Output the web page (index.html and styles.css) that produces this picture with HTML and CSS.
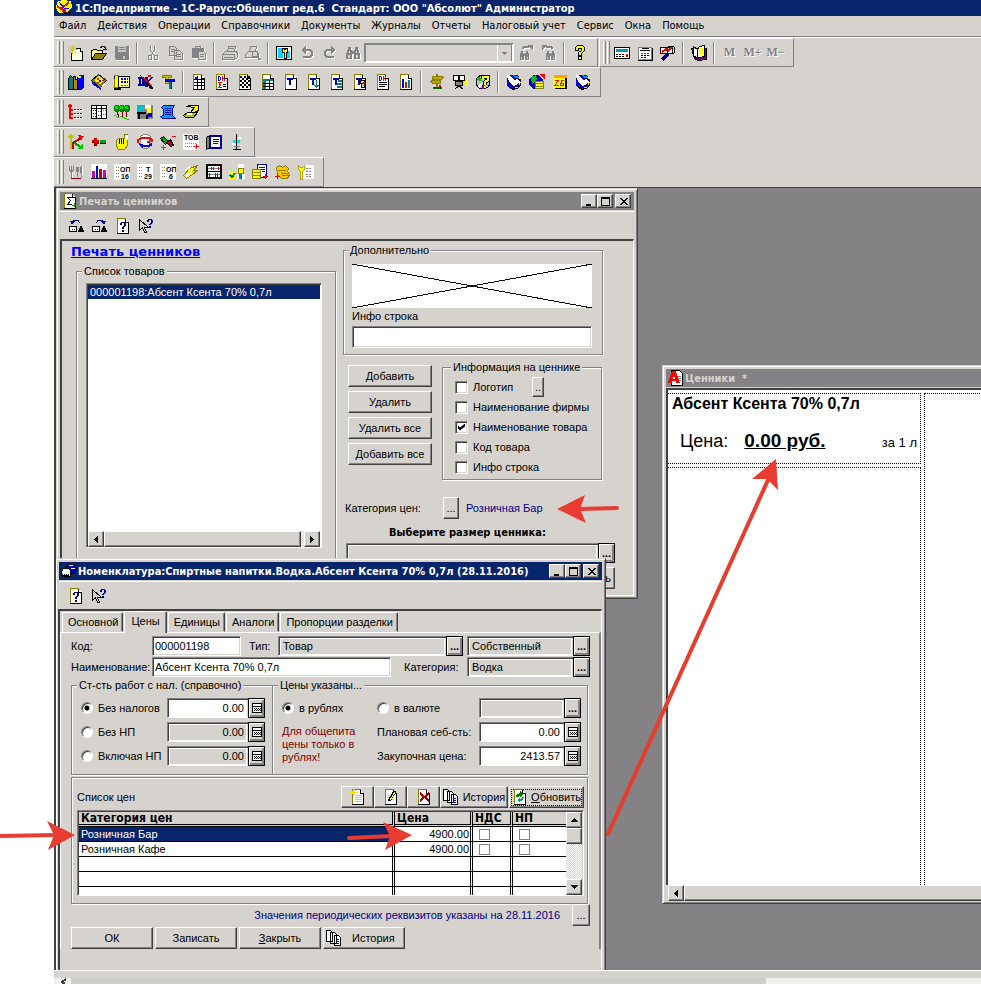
FILE: index.html
```
<!DOCTYPE html>
<html lang="ru">
<head>
<meta charset="utf-8">
<title>1С:Предприятие</title>
<link rel="stylesheet" href="styles.css">
</head>
<body>
<svg class="sprite" aria-hidden="true">
  <symbol id="pg" viewBox="0 0 16 16"><path fill="#fff" d="M3 1h7l4 4v10H3z"/><path fill="none" stroke="#848200" d="M2.5 15v-14.5h8"/><path fill="none" stroke="#000" d="M10.5 1v3.5h3M13.5 4v11.5M2 15.5h12"/></symbol>
  <symbol id="help" viewBox="0 0 16 16"><use href="#pg"/><path fill="#000084" d="M5 5h2v2H5zM6 4h4v1H6zM9 5h2v3H9zM8 8h2v1H8zM7 9h2v2H7zM7 12h2v2H7z"/></symbol>
  <symbol id="what" viewBox="0 0 16 16"><path fill="#d6d3ce" stroke="#000" d="M1.5 1.5v11l3-3 2 5h2l-2-5h4z"/><path fill="#000084" d="M10 1h4v1h-4zM9 2h2v2H9zM13 2h2v3h-2zM12 5h2v1h-2zM11 6h2v1h-2zM11 8h2v2h-2z"/></symbol>
  <symbol id="copy" viewBox="0 0 16 16"><path fill="#fff" stroke="#000" d="M.5 .5h4l2 2v9h-6zM4.500 2.500h4l2 2v9h-6zM8.500 5.500h4l2 2v8h-6z"/><path stroke="#0000ff" d="M10 9.500h3M10 11.500h3M10 13.500h3"/></symbol>
  <symbol id="calc" viewBox="0 0 10 10"><path fill="#fff" stroke="#000" d="M.5 .5h9v9h-9z"/><path fill="#000" d="M1 3h8v1H1zM2 5h1v1H2zM4 5h1v1H4zM6 5h1v1H6zM8 5h1v1H8zM3 6h1v1H3zM5 6h1v1H5zM7 6h1v1H7zM2 7h1v1H2zM4 7h1v1H4zM6 7h1v1H6zM8 7h1v1H8z"/></symbol>
  <symbol id="find" viewBox="0 0 16 16"><path fill="#848284" d="M3 2h3v3H3zM10 2h3v3h-3zM2 5h5v3H2zM9 5h5v3H9zM7 6h2v3H7zM1 8h6v6H1zM9 8h6v6H9z"/><path fill="#d6d3ce" d="M4 6h1v2H4zM11 6h1v2h-1zM3 10h2v3H3zM11 10h2v3h-2z"/></symbol>
  <symbol id="globe" viewBox="0 0 16 16"><circle cx="8" cy="8" r="7.500" fill="#0000c6"/><path fill="#000" d="M3 12l5 2 5-2 2-5v4l-4 4-4 1-4-3z"/><path fill="#00a0c0" d="M7 1l4 1 2 2h-4z"/><path fill="#fff" d="M1 1l4 1 3 4 4-1 2 3-4 3-3 1-4-4z"/><path fill="#ffff00" d="M13 3h2v2h-2zM13 8h2l-2 4zM9 13h3v1H9z"/></symbol>
  <symbol id="dk" viewBox="0 0 16 16"><use href="#pg"/><path fill="#0000ff" d="M4 2h1v5H4zM5 2h1v1H5zM6 3h1v3H6zM5 6h1v1H5z"/><path fill="#f00" d="M8 2h1v5H8zM9 4h1v1H9zM10 2h1v2h-1zM10 5h1v2h-1z"/></symbol>
  <symbol id="tee" viewBox="0 0 16 16"><use href="#pg"/><path fill="#0000a0" d="M4 4h6v2H8v5H6V6H4z"/></symbol>
  <symbol id="list" viewBox="0 0 16 16"><path fill="#fff" d="M0 0h16v16H0z"/><path stroke="#848284" stroke-dasharray="1 1" d="M2 3.500h12M2 6.500h12M2 9.500h12M2 12.500h12"/></symbol>
</svg>

<div class="app">
  <header class="titlebar">
    <svg class="ic" viewBox="0 0 16 16"><path fill="#ffff00" d="M1 2l5-2 9 1 1 6-5 5-8 1-3-5z"/><path fill="none" stroke="#f00" stroke-width="2" d="M1 6l4 3 8-7"/><path fill="none" stroke="#0000ff" d="M3 2l5 6 5 1"/><path fill="#f00" d="M6 9h4v3H6z"/><path fill="#000" d="M8 12h3v2H8zM12 11h3v3h-3z"/></svg>
    <h1>1С:Предприятие - 1С-Рарус:Общепит ред.6&nbsp; Стандарт: ООО "Абсолют" Администратор</h1>
  </header>
  <nav class="menu">
    <button>Файл</button><button>Действия</button><button>Операции</button><button>Справочники</button><button>Документы</button><button>Журналы</button><button>Отчеты</button><button>Налоговый учет</button><button>Сервис</button><button>Окна</button><button>Помощь</button>
  </nav>

  <div class="bars">
    <div class="barline">
      <div class="bar">
        <button aria-label="Новый"><svg class="ic" viewBox="0 0 16 16"><path fill="#ffffde" d="M4 4h7l4 4v8H4z"/><path fill="none" stroke="#000" d="M3.500 8v7.500h11v-9M11 3.500h1v3h3M8 3.500h3"/><path stroke="#e7c300" fill="none" d="M4.500 0v9M0 4.500h9M1 1l7 7M8 1L1 8"/></svg></button>
        <button aria-label="Открыть"><svg class="ic" viewBox="0 0 16 16"><path fill="#ffff84" stroke="#000" d="M.5 14.500v-9h1l1-1h3l1 1h5v3"/><path fill="#848200" stroke="#000" d="M.5 14.500l4-6h11l-4 6z"/><path fill="none" stroke="#000" d="M9 2.500h1l1-1h2l1 1v2M12 4.500h4"/></svg></button>
        <button class="off" aria-label="Сохранить" disabled><svg class="ic" viewBox="0 0 16 16"><path fill="#848284" d="M1 1h14v14H2l-1-1z"/><path fill="#c6c3c6" d="M4 1h8v6H4z"/><path fill="#848284" d="M5 2h6v1H5zM5 4h6v1H5z"/><path fill="#c6c3c6" d="M9 11h2v3H9z"/></svg></button>
        <i class="sep"></i>
        <button class="off" aria-label="Вырезать" disabled><svg class="ic" viewBox="0 0 16 16"><path fill="none" stroke="#848284" d="M5.500 1v4l4 6M9.500 1v4l-4 6"/><path fill="none" stroke="#848284" d="M3.500 10.500h3v4h-3zM9.500 10.500h3v4h-3z"/></svg></button>
        <button class="off" aria-label="Копировать" disabled><svg class="ic" viewBox="0 0 16 16"><path fill="#d6d3ce" stroke="#848284" d="M1.500 1.500h5l2 2v7h-7zM6.500 5.500h5l3 3v6h-8z"/><path stroke="#848284" d="M3 4.500h4M3 6.500h3M8 9.500h5M8 11.500h5"/></svg></button>
        <button class="off" aria-label="Вставить" disabled><svg class="ic" viewBox="0 0 16 16"><path fill="#848284" d="M1 3h3V1h6v2h3v10H1z"/><path fill="#d6d3ce" stroke="#848284" d="M7.500 6.500h5l2 2v6h-7z"/><path stroke="#848284" d="M9 9.500h4M9 11.500h4"/><path fill="#d6d3ce" d="M5 2h4v1H5z"/></svg></button>
        <i class="sep"></i>
        <button class="off" aria-label="Печать" disabled><svg class="ic" viewBox="0 0 16 16"><path fill="#d6d3ce" stroke="#848284" d="M5.500 6.500l1-5h7l-1 5M.5 9.500l3-3h11l1 2v4l-3 2h-12z"/><path stroke="#848284" d="M7 3.500h5M1 9.500h12M2 12.500h9M12.500 10v5"/></svg></button>
        <button class="off" aria-label="Просмотр" disabled><svg class="ic" viewBox="0 0 16 16"><path fill="#d6d3ce" stroke="#848284" d="M4.500 6.500l1-5h6l-1 5M.5 9.500l3-3h8l2 2v4h-13z"/><circle cx="10" cy="9" r="3" fill="#d6d3ce" stroke="#848284"/><path stroke="#848284" stroke-width="2" d="M12 11l3 4"/></svg></button>
        <i class="sep"></i>
        <button aria-label="Ключ"><svg class="ic" viewBox="0 0 16 16"><path fill="#fff" stroke="#000" d="M.5 1.500h15v13H.5z"/><path fill="#00d7ff" d="M2 3h5v10H2zM11 6h3v7h-3z"/><path fill="#ffff00" stroke="#000" d="M6.500 3.500h5v4h-1v6h-2v-6h-2z"/><path fill="#000" d="M8 4h2v1H8z"/></svg></button>
        <button class="off" aria-label="Отменить" disabled><svg class="ic" viewBox="0 0 16 16"><path fill="none" stroke="#848284" stroke-width="2" d="M3 5h8l2 2v3l-2 2H4"/><path fill="#848284" d="M2 5l5-4v8z"/></svg></button>
        <button class="off" aria-label="Вернуть" disabled><svg class="ic" viewBox="0 0 16 16"><path fill="none" stroke="#848284" stroke-width="2" d="M13 5H5L3 7v3l2 2h7"/><path fill="#848284" d="M14 5L9 1v8z"/></svg></button>
        <button class="off" aria-label="Найти" disabled><svg class="ic"><use href="#find"/></svg></button>
        <select class="search" aria-label="Поиск"><option></option></select>
        <button class="off" aria-label="Найти далее" disabled><svg class="ic" viewBox="0 0 16 16"><use href="#find" x="1" y="5" width="11" height="11"/><path fill="none" stroke="#848284" stroke-width="2" d="M4 4l2-2h5"/><path fill="#848284" d="M10 0h5v6z"/></svg></button>
        <button class="off" aria-label="Найти ранее" disabled><svg class="ic" viewBox="0 0 16 16"><use href="#find" x="4" y="5" width="11" height="11"/><path fill="none" stroke="#848284" stroke-width="2" d="M12 4l-2-2H5"/><path fill="#848284" d="M6 0H1v6z"/></svg></button>
        <i class="sep"></i>
        <button aria-label="Справка"><svg class="ic" viewBox="0 0 16 16"><path fill="#ffff00" stroke="#000" d="M3.500 5.500v-3l2-2h5l2 2v3l-3 3v2h-3v-3l3-2v-2h-3v2zM6.500 11.500h3v3h-3z"/></svg></button>
      </div>
      <div class="bar">
        <button aria-label="Калькулятор"><svg class="ic" viewBox="0 0 16 16"><path fill="#fff" stroke="#000" d="M.5 2.500h15v11H.5z"/><path fill="#00a2a5" d="M2 4h12v3H2z"/><path fill="#000" d="M2 9h2v1H2zM5 9h2v1H5zM8 9h2v1H8zM2 11h2v1H2zM5 11h2v1H5zM8 11h2v1H8z"/><path fill="#f00" d="M12 9h2v3h-2z"/></svg></button>
        <button aria-label="Расчет"><svg class="ic" viewBox="0 0 16 16"><path fill="#fff" stroke="#848284" d="M1.500 2.500h13v12h-13z"/><path fill="#000" d="M5 3h7v1H5zM3 5h10v1H3zM1 15h14v1H1zM15 3h1v13h-1zM4 10h2v1H4zM7 10h2v1H7zM10 10h2v1h-2zM4 12h2v1H4zM7 12h2v1H7z"/><path fill="#f00" d="M4 8h2v1H4zM7 8h2v1H7zM10 8h2v1h-2z"/></svg></button>
        <button aria-label="Табло"><svg class="ic" viewBox="0 0 16 16"><path fill="#fff" stroke="#000" d="M.5 2.500h12v6H.5z"/><path fill="none" stroke="#f00" stroke-width="2" d="M2 7l4-3 2 2 4-4"/><circle cx="11" cy="5" r="4" fill="none" stroke="#000"/><path stroke="#000084" stroke-width="3" d="M8 9l-6 6"/></svg></button>
        <i class="sep"></i>
        <button aria-label="Синтакс-помощник"><svg class="ic" viewBox="0 0 16 16"><path fill="#840084" stroke="#000" d="M.5 3.500l3 10 3 2 9-1V4z"/><path fill="#fff" stroke="#000" d="M2.500 1.500l4 3v9l-4-3zM6.500 4.500l2-3 5-1v11l-5 1-2 1z"/><path stroke="#ffff00" stroke-width="3" stroke-dasharray="1 1" d="M10 3v8"/></svg></button>
        <i class="sep"></i>
        <button class="off mem" disabled>M</button>
        <button class="off mem" disabled>M+</button>
        <button class="off mem" disabled>M−</button>
      </div>
    </div>

    <div class="barline">
      <div class="bar">
        <button aria-label="План счетов"><svg class="ic" viewBox="0 0 16 16"><path fill="#008284" stroke="#000" d="M.5 4.500l2-3 3 3v11h-5z"/><path fill="#c68200" stroke="#000" d="M5.500 2.500h2v3h2v10h-4z"/><path fill="#0000ff" stroke="#000" d="M9.500 3.500l2-2h4v12l-2 2h-4z"/><path fill="#ffff00" d="M10 2h3v2h-3z"/></svg></button>
        <button aria-label="Справочник"><svg class="ic" viewBox="0 0 16 16"><path fill="#848200" stroke="#000" d="M.5 6.500l7-6 8 6-6 8z"/><path fill="#ffff00" d="M3 6l5-4 5 4-4 4z"/><path fill="#0000ff" d="M1 8l9 6v2L1 10z"/><path stroke="#fff" d="M10 14l5-6"/><path fill="#f00" d="M6 4h2v2H6zM11 6h2v1h-2zM6 8h2v1H6z"/><path fill="#0000ff" d="M8 6h2v2H8z"/></svg></button>
        <button aria-label="Журнал операций"><svg class="ic" viewBox="0 0 16 16"><path fill="#ffff00" stroke="#848200" d="M.5 1.500h4v12h-4z"/><path fill="#ffff84" stroke="#000" d="M4.500 2.500h11v11h-11z"/><path stroke="#0000ff" stroke-width="2" stroke-dasharray="2 1" d="M7 5h7M7 8h7"/><path stroke="#f00" stroke-dasharray="2 1" d="M7 11.500h7"/><path fill="#000" d="M0 14h7v2H0zM0 2h1v3H0z"/></svg></button>
        <button aria-label="Проводка"><svg class="ic" viewBox="0 0 16 16"><path fill="#0000a0" d="M1 3h5l2 2v7H1v-2h1V5H1zM8 3h3v4l3-4h2l-4 5 4 6h-2l-3-5v4H8z"/><path fill="#d6d3ce" d="M4 5h1v5H4z"/><path stroke="#f00" d="M3 1l12 11"/><path stroke="#000" stroke-width="2" d="M9 8l6 7"/><path fill="#f00" d="M11 1h3v2h-3z"/></svg></button>
        <button aria-label="Типовые операции"><svg class="ic" viewBox="0 0 16 16"><path fill="#c6c300" stroke="#848200" d="M2.500 1.500h9v2h-3v6h-3v-6h-3z"/><path fill="#0000ff" d="M5 5h10v3h-3v7H9V8H5z"/><path fill="#008284" d="M9 8h2v7H9z"/></svg></button>
        <i class="sep"></i>
        <button aria-label="Таблица"><svg class="ic" viewBox="0 0 16 16"><use href="#pg"/><path stroke="#000" fill="none" d="M3 5.500h10M3 8.500h10M3 11.500h10M6.500 2v13M10.500 5v10"/><path fill="#0000ff" d="M4 3h2v2H4z"/></svg></button>
        <button aria-label="Сальдо"><svg class="ic" viewBox="0 0 16 16"><use href="#dk"/><path fill="none" stroke="#f00" d="M8 8.500H4.500l2 2.500-2 2.500H8"/><path stroke="#000" d="M9 10.500h3M9 12.500h3"/></svg></button>
        <button aria-label="Шахматка"><svg class="ic" viewBox="0 0 16 16"><use href="#pg"/><path stroke="#000" stroke-width="2" stroke-dasharray="2 2" d="M3 3h10M3 7h10M3 11h10"/><path stroke="#000" stroke-width="2" stroke-dasharray="2 2" stroke-dashoffset="2" d="M3 5h10M3 9h10M3 13h10"/></svg></button>
        <button aria-label="Оборотка"><svg class="ic" viewBox="0 0 16 16"><use href="#pg"/><path fill="#008284" d="M3 5h3v10H3zM6 5h7v2H6z"/><path stroke="#000" d="M3 9.500h10M3 12.500h10M9.500 6v9"/></svg></button>
        <button aria-label="Карточка"><svg class="ic" viewBox="0 0 16 16"><use href="#tee"/></svg></button>
        <button aria-label="Карточка счета"><svg class="ic" viewBox="0 0 16 16"><use href="#tee"/><path fill="#008284" d="M10 6h1v5h2l-3 3-2-3h2z"/></svg></button>
        <button aria-label="Анализ"><svg class="ic" viewBox="0 0 16 16"><use href="#tee"/><path fill="#008284" d="M9 6h4v2H9zM8 9h5v2H8zM8 12h5v2H8z"/></svg></button>
        <button aria-label="Анализ счета"><svg class="ic" viewBox="0 0 16 16"><use href="#tee"/><path fill="#d6d3ce" stroke="#000" d="M8.500 6.500h4v3h-4zM9.500 9.500v4h3v-4"/><path fill="#f00" d="M11 8h2v2h-2z"/></svg></button>
        <button aria-label="Отчет"><svg class="ic" viewBox="0 0 16 16"><use href="#dk"/><path stroke="#000" d="M4 8.500h8M4 10.500h8M4 12.500h6"/></svg></button>
        <button aria-label="Диаграмма"><svg class="ic" viewBox="0 0 16 16"><use href="#pg"/><path fill="#0000ff" d="M4 5h2v9H4z"/><path fill="#f00" d="M7 8h2v6H7z"/><path fill="#008284" d="M10 6h2v8h-2z"/></svg></button>
        <i class="sep"></i>
        <button aria-label="Путеводитель"><svg class="ic" viewBox="0 0 16 16"><path fill="#848200" d="M7 0h2v15H7z"/><path fill="#c6a200" stroke="#848200" d="M3.500 2.500h9l2 1-2 2h-9zM1.500 7.500l2-1h8v3h-8z"/><path fill="#006500" d="M4 13h9v2H4z"/><path fill="#f00" d="M10 11h2v2h-2z"/></svg></button>
        <button aria-label="Видео"><svg class="ic" viewBox="0 0 16 16"><circle cx="4" cy="4" r="3" fill="#fff" stroke="#000"/><circle cx="10" cy="4" r="3" fill="#fff" stroke="#000"/><path fill="#848284" stroke="#000" d="M3.500 7.500h7v4h-7z"/><path fill="none" stroke="#000" d="M7 12l-4 3M7 12l4 3"/><path fill="#ffff00" d="M11 9l5-5v10z"/></svg></button>
        <button aria-label="Диск"><svg class="ic" viewBox="0 0 16 16"><circle cx="8" cy="8" r="7" fill="#a5c6c6" stroke="#000"/><path fill="#00c300" d="M8 8L1 5l3-3z"/><path fill="#8400c6" d="M8 8l3 6-4 1z"/><path fill="#fff" d="M8 8L2 12l3 2z"/><path fill="none" stroke="#000" stroke-width="4" d="M8 5V3h5v3l-3 2v3"/><path fill="none" stroke="#ffff00" stroke-width="2" d="M8 5V3h5v3l-3 2v3M10 12v2"/></svg></button>
        <i class="sep"></i>
        <button aria-label="Интернет"><svg class="ic"><use href="#globe"/></svg></button>
        <button aria-label="Курсы валют"><svg class="ic" viewBox="0 0 16 16"><circle cx="7" cy="8" r="7" fill="#0000c6"/><path fill="#00c300" d="M2 3l5-2 1 5-5 4z"/><path fill="#f00" d="M10 0h6v6z"/><path fill="#ffff00" stroke="#848200" d="M6.500 7.500h8v7h-8z"/><path stroke="#848200" d="M7 9.500h7M7 12.500h7"/></svg></button>
        <button aria-label="Календарь"><svg class="ic" viewBox="0 0 16 16"><path fill="#000" d="M2 2h13v13H3z"/><path fill="#ffff00" d="M1 3h12v11H1z"/><path fill="#ffa200" d="M2 1h13v3H2z"/><path fill="none" stroke="#f00" d="M3 6.500h3l-3 5h4M11.500 6.500h-2l-1 5h3v-2h-3"/></svg></button>
        <button aria-label="Сайт"><svg class="ic"><use href="#globe"/></svg></button>
      </div>
    </div>

    <div class="barline">
      <div class="bar">
        <button aria-label="Структура"><svg class="ic" viewBox="0 0 16 16"><path fill="none" stroke="#f00" stroke-width="2" d="M2 0v15M0 2h4M2 6h3M2 10h3M2 14h3"/><path stroke="#fff" stroke-width="2" d="M6 6h9M6 10h9M6 14h9"/><path stroke="#840000" stroke-dasharray="2 1" d="M6 5.500h9M6 9.500h9M6 13.500h9"/></svg></button>
        <button aria-label="Реестр"><svg class="ic" viewBox="0 0 16 16"><path fill="#fff" stroke="#000" d="M.5 1.500h15v13H.5zM5.500 2v12M10.500 2v12M1 4.500h14"/><path stroke="#0000ff" stroke-dasharray="1 1" d="M2 6.500h3M2 9.500h3M2 12.500h3"/><path stroke="#f00" stroke-dasharray="1 1" d="M7 7.500h3M7 11.500h3"/><path stroke="#00c300" stroke-dasharray="1 1" d="M12 6.500h3M12 10.500h3"/></svg></button>
        <button aria-label="Сады"><svg class="ic" viewBox="0 0 16 16"><path fill="#008200" d="M0 2h1V1h4v1h1V1h4v1h1V1h4v1h1v5h-1v1h-4V7h-1v1H6V7H5v1H1V7H0z"/><path fill="#00e300" d="M1 2h3v3H1zM6 2h3v3H6zM11 2h3v3h-3z"/><path stroke="#840000" fill="none" d="M3 8l2 5M8 8l1 5M13 8l-1 5"/><path stroke="#00e300" fill="none" d="M0 11l5 3M6 12l9 4"/></svg></button>
        <button aria-label="Сотрудник"><svg class="ic" viewBox="0 0 16 16"><path fill="#848284" d="M0 1h16v14H0z"/><path fill="#00c3c6" d="M1 2h6v5H1z"/><path fill="#fff" d="M8 1h6v4H8z"/><path fill="#ffff00" d="M10 4h4v5h-4z"/><path fill="#0000c6" d="M11 9h4v4h-4z"/><path fill="#000" d="M0 8h9v2H0zM1 10h2v5H1zM9 11h2v4H9z"/></svg></button>
        <button aria-label="Свиток"><svg class="ic" viewBox="0 0 16 16"><path fill="#00a2ff" stroke="#0000a0" d="M3.500 1.500h11l-2 3v7l3 3h-13l-2-2 3-1v-6l-2-2z"/><path stroke="#0000a0" d="M5 4.500h6M5 6.500h6M5 8.500h6M5 10.500h6"/></svg></button>
        <button aria-label="Степлер"><svg class="ic" viewBox="0 0 16 16"><path fill="#ffff00" stroke="#000" d="M4.500 2.500l2-1h9v5l-4 2h-4l4-5z"/><path fill="#c6c300" stroke="#000" d="M.5 11.500l4-3h10l-4 5h-8z"/><path fill="#fff" d="M4 9h5v2H4z"/></svg></button>
      </div>
    </div>

    <div class="barline">
      <div class="bar">
        <button aria-label="Движение"><svg class="ic" viewBox="0 0 16 16"><path fill="none" stroke="#c6c300" stroke-width="2" d="M3 15V2M0 4l3-3 3 3"/><path fill="none" stroke="#c60000" stroke-width="2" d="M5 15V9l8-5"/><path fill="#f00" d="M10 1l6 1-3 5z"/><path fill="none" stroke="#00a200" stroke-width="2" d="M6 9l7 4"/><path fill="#00c300" d="M15 9v6h-6z"/></svg></button>
        <button aria-label="Плюс-минус"><svg class="ic" viewBox="0 0 16 16"><path fill="#c60000" d="M3 4h3v7H3zM1 6h7v3H1z"/><path fill="#00a200" d="M9 6h6v3H9z"/><path fill="#000" d="M3 11h3v1H3zM6 9h2v1H6zM9 9h6v1H9z"/></svg></button>
        <button aria-label="Ручной ввод"><svg class="ic" viewBox="0 0 16 16"><path fill="#ffff00" stroke="#848200" d="M2.500 6.500l2-2h6v-4h3v11l-3 4h-6l-2-3z"/><path fill="#fff" d="M11 1h3v5h-3z"/><path stroke="#000" d="M5.500 5v5M7.500 5v5M9.500 5v5"/></svg></button>
        <button aria-label="Обмен"><svg class="ic" viewBox="0 0 16 16"><path fill="#fff" stroke="#848284" d="M3.500 2.500l3-2h4l3 2v9l-3 3h-4l-3-2z"/><path fill="none" stroke="#f00" stroke-width="2" d="M1 9V6l4-2h7l3 2v2"/><path fill="none" stroke="#0000ff" stroke-width="2" d="M2 10l4 2h6l3-2"/><path fill="#f00" d="M9 8l4-2v4z"/><path fill="#0000ff" d="M6 10l-3 2 3 3z"/></svg></button>
        <button aria-label="Связь"><svg class="ic" viewBox="0 0 16 16"><path fill="#00a200" stroke="#000" d="M.5 4.500l3-2 5 5-3 3z"/><path fill="#c60000" stroke="#000" d="M6.500 8.500l4-3 3 6-3 1z"/><path stroke="#f00" d="M12 2.500h4"/><path fill="#00a200" d="M1 13h5v1H1zM3 11h1v5H3z"/></svg></button>
        <button aria-label="Товары"><svg class="ic" viewBox="0 0 16 16"><use href="#list"/><path fill="#fff" d="M0 0h16v7H0z"/><text class="tiny" x="1" y="6">ТОВ</text><path stroke="#f00" fill="none" d="M11 12.500h5M13.500 10v5"/></svg></button>
        <button aria-label="Книга"><svg class="ic" viewBox="0 0 16 16"><path fill="#848284" stroke="#000" d="M.5 3.500l3-2v12l-3 2z"/><path fill="#fff" stroke="#0000a0" stroke-width="2" d="M4 2h11v12H4z"/><path stroke="#0000ff" d="M7 5.500h6M7 7.500h6M7 9.500h5"/></svg></button>
        <button aria-label="Весы"><svg class="ic" viewBox="0 0 16 16"><path stroke="#000" d="M7.500 0v15M4 15.500h8"/><path fill="#00e3e7" d="M4 6h3v3H4zM8 6h3v3H8z"/><path fill="#fff" d="M3 9h4v2H3zM9 3h3v2H9z"/><path stroke="#848284" d="M5 12.500h6"/></svg></button>
      </div>
    </div>

    <div class="barline">
      <div class="bar">
        <button aria-label="Кухня"><svg class="ic" viewBox="0 0 16 16"><path fill="none" stroke="#848284" d="M1.500 2v4l2 2v6M3.500 2v5M5.500 2v4l-2 2M9.500 3v10M8.500 3v4h2V3M13.500 2v12M12.500 3v6"/><path stroke="#fff" d="M4.500 8v6M14.500 3v9"/><path stroke="#840000" d="M3 14.500h10"/></svg></button>
        <button aria-label="Графики"><svg class="ic" viewBox="0 0 16 16"><path fill="#fff" d="M0 0h16v15H0z"/><path fill="#c600c6" d="M1 7h3v7H1zM12 6h3v8h-3z"/><path fill="#0000c6" d="M5 2h2v12H5z"/><path fill="#c60000" d="M8 5h3v9H8z"/><path fill="#000" d="M0 14h16v1H0z"/></svg></button>
        <button aria-label="Форма ОП-16"><svg class="ic" viewBox="0 0 16 16"><use href="#list"/><path fill="#fff" d="M6 1h10v15H6z"/><text class="tiny" x="6" y="8">ОП</text><text class="tiny" x="7" y="15">16</text></svg></button>
        <button aria-label="Форма Т-29"><svg class="ic" viewBox="0 0 16 16"><use href="#list"/><path fill="#fff" d="M6 1h10v15H6z"/><text class="tiny" x="9" y="8">Т</text><text class="tiny" x="7" y="15">29</text></svg></button>
        <button aria-label="Форма ОП-6"><svg class="ic" viewBox="0 0 16 16"><use href="#list"/><path fill="#fff" d="M6 1h10v15H6z"/><text class="tiny" x="6" y="8">ОП</text><text class="tiny" x="9" y="15">6</text></svg></button>
        <button aria-label="Передача"><svg class="ic" viewBox="0 0 16 16"><path fill="#ffff00" stroke="#848200" d="M.5 11.500l6-7 8-3-4 5h4l-5 4-6 4z"/><path stroke="#fff" stroke-width="2" d="M2 7l5-4M3 12l5-4"/></svg></button>
        <button aria-label="Счеты"><svg class="ic" viewBox="0 0 16 16"><path fill="#fff" stroke="#000" stroke-width="2" d="M1 1h14v13H1z"/><path stroke="#848284" d="M2 4.500h12M2 10.500h12"/><path stroke="#c60000" d="M5.500 3v3M7.500 3v3M12.500 3v3M3.500 9v4M9.500 9v4M11.500 9v4"/><path stroke="#000" d="M2 7.500h12"/></svg></button>
        <button aria-label="Повар"><svg class="ic" viewBox="0 0 16 16"><path fill="#fff" d="M9 0h6v4H9zM8 10h8v5H8z"/><path fill="#ffff00" stroke="#848200" d="M9.500 4.500h5v5h-5z"/><path fill="#ffff00" d="M0 8h7v7H0z"/><path stroke="#008200" fill="none" stroke-width="2" d="M1 11l2 2 3-4"/><path fill="#008284" d="M10 10h3v5h-3z"/></svg></button>
        <button aria-label="Оплата"><svg class="ic" viewBox="0 0 16 16"><path fill="#fff" stroke="#0000a0" d="M5.500 .5h9v13h-9z"/><path stroke="#0000ff" d="M7 3.500h6M7 5.500h6M10 7.500h3"/><path fill="#ffff00" stroke="#848200" d="M.5 5.500h8v9h-8zM1 8.500h8M1 11.500h8"/><path stroke="#f00" d="M11 12.500h5M13.500 10v5"/></svg></button>
        <button aria-label="Касса"><svg class="ic" viewBox="0 0 16 16"><path fill="#ffc600" stroke="#848200" d="M1.500 3.500l3-2 3 2 3-2 3 3-1 3 2 3-2 4h-6l-4-4z"/><path stroke="#848200" fill="none" d="M3 6.500h8M6 9.500h8M7 11.500h7"/><path stroke="#f00" d="M0 12.500h5M2.500 10v5"/></svg></button>
        <button aria-label="Настройка"><svg class="ic" viewBox="0 0 16 16"><path fill="#fff" d="M5 1h11v14H5z"/><path stroke="#848284" stroke-dasharray="2 1" d="M8 4.500h6M8 7.500h6M8 10.500h6M8 12.500h6"/><path fill="#ffff00" stroke="#c6a200" d="M.5 1.500l2 2h2l2-2v4l-2 2v8h-2v-8l-2-2z"/></svg></button>
      </div>
    </div>
  </div>

  <main class="desktop">
    <section class="win labels">
      <header class="cap">
        <svg class="ic" viewBox="0 0 16 16"><use href="#pg"/><path fill="none" stroke="#000" d="M10 4.500H5.500l3 3-3 4H10"/><path stroke="#00a200" d="M10 12.500h4M12.500 10v4"/></svg>
        <h2>Печать ценников</h2>
        <button class="cb" aria-label="Свернуть"><svg viewBox="0 0 9 9"><path d="M1 7h5v2H1z"/></svg></button><button class="cb" aria-label="Развернуть"><svg viewBox="0 0 9 9"><path d="M0 0h9v9H0zM1 2v6h7V2z" fill-rule="evenodd"/></svg></button><button class="cb x" aria-label="Закрыть"><svg viewBox="0 0 9 9"><path d="M0 1h2l2.500 2.500L7 1h2L5.500 4.500 9 8H7L4.500 5.500 2 8H0l3.500-3.500z"/></svg></button>
      </header>
      <div class="wtools">
        <button aria-label="Загрузить"><svg class="ic" viewBox="0 0 16 16"><path fill="none" stroke="#000084" d="M3 5l2-2.500h4L11 5"/><path fill="#000084" d="M1 3h5L3 7z"/><path fill="#fff" stroke="#000" d="M.5 8.500h7v5h-7z"/><path fill="#000" d="M3 11h1v1H3zM5 11h1v1H5zM11 8h2v2h1v2h1v2H9v-2h1v-2h1z"/></svg></button>
        <button aria-label="Сохранить"><svg class="ic" viewBox="0 0 16 16"><path fill="none" stroke="#000084" d="M4 5l2-2.500h4L12 5"/><path fill="#000084" d="M14 3H9l3 4z"/><path fill="#fff" stroke="#000" d="M.5 8.500h7v5h-7z"/><path fill="#000" d="M3 11h1v1H3zM5 11h1v1H5zM11 8h2v2h1v2h1v2H9v-2h1v-2h1z"/></svg></button>
        <button aria-label="Описание"><svg class="ic"><use href="#help"/></svg></button>
        <button aria-label="Что это?"><svg class="ic"><use href="#what"/></svg></button>
      </div>
      <div class="client split">
        <div class="goods">
          <a class="heading" href="#">Печать ценников</a>
          <fieldset class="box goodsbox">
            <legend>Список товаров</legend>
            <div class="list">
              <div class="item on">000001198:Абсент Ксента 70% 0,7л</div>
              <div class="hbar"><button class="sb" aria-label="Влево"><svg viewBox="0 0 5 9"><path d="M5 0v9L0 4.500z"/></svg></button><i class="thumb"></i><button class="sb" aria-label="Вправо"><svg viewBox="0 0 5 9"><path d="M0 0v9l5-4.500z"/></svg></button></div>
            </div>
          </fieldset>
        </div>
        <div class="opts">
          <fieldset class="box extra">
            <legend>Дополнительно</legend>
            <svg class="logo" viewBox="0 0 239 44" preserveAspectRatio="none"><path d="M0 0l239 44M239 0L0 44"/></svg>
            <label for="info">Инфо строка</label>
            <input class="fld" id="info" type="text">
          </fieldset>
          <div class="mid">
            <div class="acts"><button class="btn">Добавить</button><button class="btn">Удалить</button><button class="btn">Удалить все</button><button class="btn">Добавить все</button></div>
            <fieldset class="box checks">
              <legend>Информация на ценнике</legend>
              <div class="ck"><label><input type="checkbox">Логотип</label><button class="btn two">..</button></div>
              <div class="ck"><label><input type="checkbox">Наименование фирмы</label></div>
              <div class="ck"><label><input type="checkbox" checked>Наименование товара</label></div>
              <div class="ck"><label><input type="checkbox">Код товара</label></div>
              <div class="ck"><label><input type="checkbox">Инфо строка</label></div>
            </fieldset>
          </div>
          <div class="cat"><span class="catname">Категория цен:</span><button class="btn dots">...</button><span class="navy">Розничная Бар</span></div>
          <div class="size"><label for="size">Выберите размер ценника:</label></div>
          <div class="combo sizefld"><input id="size" type="text" readonly><button aria-label="Выбрать размер">...</button></div>
          <button class="btn print">Печать</button>
        </div>
      </div>
    </section>

    <section class="win sheet">
      <header class="cap">
        <svg class="ic" viewBox="0 0 16 16"><path fill="#fff" stroke="#000" d="M3.500 .5h8l3 3v12h-11z"/><path stroke="#848284" d="M9 6.500h4M9 8.500h4M9 10.500h4"/><path fill="#f00" fill-rule="evenodd" d="M4 1h4l4 12H8l-.5-2h-3L4 13H0zM6 5L5 9h2z"/></svg>
        <h2>Ценники&nbsp; *</h2>
      </header>
      <div class="paper">
        <div class="tag">
          <div class="tname">Абсент Ксента 70% 0,7л</div>
          <div class="tprice"><span>Цена:</span><strong>0.00 руб.</strong><small>за 1 л</small></div>
        </div>
        <div class="rest"></div>
        <div class="next"></div>
      </div>
      <div class="hbar"><button class="sb" aria-label="Влево"><svg viewBox="0 0 5 9"><path d="M5 0v9L0 4.500z"/></svg></button><i class="thumb"></i></div>
    </section>

    <section class="win card active">
      <header class="cap">
        <svg class="ic" viewBox="0 0 16 16"><path fill="#0000c6" stroke="#000" d="M4.500 4.500l4-3h5l2 4-2 5h-3z"/><path fill="#fff" stroke="#000" d="M.5 8.500l2-3h5l2 2v6h-2v-2l-1 2h-1v-2l-1 2h-1v-2l-2 2z"/><path stroke="#fff" d="M8 2.500h4M10 5.500h4"/></svg>
        <h2>Номенклатура:Спиртные напитки.Водка.Абсент Ксента 70% 0,7л (28.11.2016)</h2>
        <button class="cb" aria-label="Свернуть"><svg viewBox="0 0 9 9"><path d="M1 7h5v2H1z"/></svg></button><button class="cb" aria-label="Развернуть"><svg viewBox="0 0 9 9"><path d="M0 0h9v9H0zM1 2v6h7V2z" fill-rule="evenodd"/></svg></button><button class="cb x" aria-label="Закрыть"><svg viewBox="0 0 9 9"><path d="M0 1h2l2.500 2.500L7 1h2L5.500 4.500 9 8H7L4.500 5.500 2 8H0l3.500-3.500z"/></svg></button>
      </header>
      <div class="wtools">
        <button aria-label="Описание"><svg class="ic"><use href="#help"/></svg></button>
        <button aria-label="Что это?"><svg class="ic"><use href="#what"/></svg></button>
      </div>
      <div class="client">
        <div class="tabs"><button>Основной</button><button class="cur">Цены</button><button>Единицы</button><button>Аналоги</button><button>Пропорции разделки</button></div>
        <div class="panel">
          <div class="line"><label class="l1" for="code">Код:</label><input class="fld code" id="code" type="text" value="000001198"><label class="ltype" for="type">Тип:</label><div class="combo grow"><input id="type" type="text" value="Товар" readonly><button aria-label="Выбрать тип">...</button></div><div class="combo side"><input type="text" aria-label="Вид" value="Собственный" readonly><button aria-label="Выбрать вид">...</button></div></div>
          <div class="line"><label class="l1" for="name">Наименование:</label><input class="fld grow" id="name" type="text" value="Абсент Ксента 70% 0,7л"><label class="lcat" for="kind">Категория:</label><div class="combo side"><input id="kind" type="text" value="Водка" readonly><button aria-label="Выбрать категорию">...</button></div></div>
          <div class="groups">
            <fieldset class="box cost">
              <legend>Ст-сть работ с нал. (справочно)</legend>
              <div class="rw"><label><input type="radio" name="tax" checked>Без налогов</label><div class="combo num w"><input type="text" aria-label="Без налогов" value="0.00"><button aria-label="Калькулятор"><svg viewBox="0 0 10 10"><use href="#calc"/></svg></button></div></div>
              <div class="rw"><label><input type="radio" name="tax">Без НП</label><div class="combo num"><input type="text" aria-label="Без НП" value="0.00" readonly><button aria-label="Калькулятор"><svg viewBox="0 0 10 10"><use href="#calc"/></svg></button></div></div>
              <div class="rw"><label><input type="radio" name="tax">Включая НП</label><div class="combo num"><input type="text" aria-label="Включая НП" value="0.00" readonly><button aria-label="Калькулятор"><svg viewBox="0 0 10 10"><use href="#calc"/></svg></button></div></div>
            </fieldset>
            <fieldset class="box curr">
              <legend>Цены указаны...</legend>
              <label><input type="radio" name="cur" checked>в рублях</label>
              <label><input type="radio" name="cur">в валюте</label>
              <div class="combo"><input type="text" aria-label="Валюта" readonly><button aria-label="Выбрать валюту">...</button></div>
              <p class="warn">Для общепита цены только в рублях!</p>
              <label for="plan">Плановая себ-сть:</label>
              <div class="combo num w"><input id="plan" type="text" value="0.00"><button aria-label="Калькулятор"><svg viewBox="0 0 10 10"><use href="#calc"/></svg></button></div>
              <label for="buy">Закупочная цена:</label>
              <div class="combo num w"><input id="buy" type="text" value="2413.57"><button aria-label="Калькулятор"><svg viewBox="0 0 10 10"><use href="#calc"/></svg></button></div>
            </fieldset>
          </div>
          <div class="prices">
            <div class="ptools">
              <span>Список цен</span>
              <button class="btn" aria-label="Новая строка"><svg class="ic" viewBox="0 0 16 16"><use href="#pg"/><path stroke="#c6c3c6" d="M5 6.500h7M5 8.500h7M5 10.500h7M5 12.500h7"/><path stroke="#ffe300" fill="none" d="M3.500 0v8M0 3.500h8M1 1l6 6M6 1L1 6"/></svg></button><button class="btn" aria-label="Изменить"><svg class="ic" viewBox="0 0 16 16"><use href="#pg"/><path stroke="#c6c3c6" d="M4 6.500h7M4 8.500h7M4 10.500h7"/><path stroke="#000" stroke-width="3" d="M6 12l6-10"/><path stroke="#ffff00" d="M7 11l5-8"/></svg></button><button class="btn" aria-label="Удалить"><svg class="ic" viewBox="0 0 16 16"><use href="#pg"/><path stroke="#a50000" stroke-width="2" d="M4 4l9 8M13 4l-9 8"/></svg></button><button class="btn hist"><svg class="ic"><use href="#copy"/></svg>История</button><button class="btn upd"><span><svg class="ic" viewBox="0 0 16 16"><use href="#pg"/><path fill="#008200" d="M4 8l1-3 3-1V2l3 3-3 3V6L6 8z"/><path fill="#00a284" d="M12 8l-1 3-3 1v2l-3-3 3-3v2l2-2z"/></svg><u>О</u>бновить</span></button>
            </div>
            <div class="grid">
              <table>
                <thead><tr><th class="c1">Категория цен</th><th class="c2">Цена</th><th class="c3">НДС</th><th class="c4">НП</th></tr></thead>
                <tbody>
                  <tr class="sel"><td>Розничная Бар</td><td class="n">4900.00</td><td><input type="checkbox" aria-label="НДС"></td><td><input type="checkbox" aria-label="НП"></td></tr>
                  <tr><td>Розничная Кафе</td><td class="n">4900.00</td><td><input type="checkbox" aria-label="НДС"></td><td><input type="checkbox" aria-label="НП"></td></tr>
                  <tr><td></td><td></td><td></td><td></td></tr>
                  <tr><td></td><td></td><td></td><td></td></tr>
                  <tr><td></td><td></td><td></td><td></td></tr>
                </tbody>
              </table>
              <div class="vbar"><button class="sb" aria-label="Вверх"><svg viewBox="0 0 9 5"><path d="M0 5h9L4.500 0z"/></svg></button><i class="thumb"></i><button class="sb" aria-label="Вниз"><svg viewBox="0 0 9 5"><path d="M0 0h9L4.500 5z"/></svg></button></div>
            </div>
          </div>
          <div class="note"><span class="navy">Значения периодических реквизитов указаны на 28.11.2016</span><button class="btn dots">...</button></div>
          <div class="foot"><button class="btn">ОК</button><button class="btn">Записать</button><button class="btn"><u>З</u>акрыть</button><button class="btn hist"><svg class="ic"><use href="#copy"/></svg>История</button></div>
        </div>
      </div>
    </section>
  </main>
  <footer class="status"><i class="s1"></i><i class="s2"></i></footer>
  <div class="scroll"><button aria-label="Влево"><svg viewBox="0 0 8 6"><path d="M7 1L3 4l3 2" fill="none" stroke="#424142" stroke-width="2"/></svg></button><i></i></div>
</div>

<svg class="marks" viewBox="0 0 981 984" aria-hidden="true">
  <g stroke="#e73c31" stroke-width="4" stroke-linecap="round"><path d="M-3 836L56 835"/><path d="M349 838L392 836"/><path d="M617 508L580 509"/><path d="M608 834L768 480"/></g>
  <g fill="#e73c31"><path d="M75 835l-28-14 7 14-6 15z"/><path d="M412 835l-29-13 7 14-5 14z"/><path d="M557 509l28-14-5 14 6 14z"/><path d="M776 459l-24 20 15 0 11 11z"/></g>
</svg>
</body>
</html>
```
FILE: styles.css
```
* { box-sizing: border-box; }
body { margin: 0; background: #fff; color: #000; font: 11px/13px "Liberation Sans", Arial, sans-serif; }
button, input, select { font: inherit; color: inherit; margin: 0; padding: 0; border: 0; border-radius: 0; background: none; }
h1, h2, p { margin: 0; }
svg { display: block; flex: none; shape-rendering: crispEdges; }
.sprite { position: absolute; width: 0; height: 0; }
.ic { width: 16px; height: 16px; }
.tiny { font: bold 7px "Liberation Sans", Arial, sans-serif; }
.navy { color: #000084; }

.app { display: flex; flex-direction: column; min-height: 100vh; margin-left: 54px; background: #d6d3ce; overflow: hidden; }
.titlebar { display: flex; align-items: center; gap: 3px; height: 16px; padding-left: 2px; background: #08246b; color: #fff; }
.titlebar h1, .cap h2 { font: bold 11px/15px "DejaVu Sans Condensed", "DejaVu Sans", sans-serif; white-space: nowrap; }
.menu { display: flex; height: 21px; border-bottom: 1px solid #848284; }
.menu button { padding: 0 6px 0 5px; font: 11px/20px "DejaVu Sans Condensed", "DejaVu Sans", sans-serif; white-space: nowrap; }

/* toolbars */
.barline { display: flex; height: 30px; }
.barline:first-child { border-top: 1px solid #fff; }
.bar { display: flex; align-items: center; padding: 0 6px 0 10px; border: solid; border-width: 1px 1px 1px 0; border-color: #fff #848284 #848284; position: relative; }
.bar + .bar { margin-left: 1px; border-left: 1px solid #fff; }
.bar::before { content: ""; position: absolute; left: 3px; top: 2px; bottom: 2px; width: 7px; background: linear-gradient(90deg, #fff 1px, #d6d3ce 1px 2px, #848284 2px 3px, #d6d3ce 3px 4px, #fff 4px 5px, #d6d3ce 5px 6px, #848284 6px); }
.bar button { display: flex; align-items: center; justify-content: center; width: 23px; height: 24px; flex: none; }
.bar .off svg { filter: drop-shadow(1px 1px 0 #fff); }
.bar .mem { color: #848284; text-shadow: 1px 1px 0 #fff; font: bold 12px "Liberation Serif", "Times New Roman", serif; }
.sep { width: 2px; height: 22px; margin: 0 3px; border-left: 1px solid #848284; border-right: 1px solid #fff; }
.search { appearance: none; width: 150px; height: 20px; border: 2px solid; border-color: #848284 #fff #fff #848284; background: linear-gradient(#848284, #848284) no-repeat right 5px top 7px / 5px 1px, linear-gradient(#848284, #848284) no-repeat right 6px top 8px / 3px 1px, linear-gradient(#848284, #848284) no-repeat right 7px top 9px / 1px 1px, linear-gradient(90deg, transparent 131px, #fff 131px 132px, transparent 132px 145px, #848284 145px); background-color: #d6d3ce; }

/* windows */
.desktop { position: relative; flex: 1; min-height: 783px; border: solid; border-width: 1px 0 0 2px; border-color: #424142; background: #848284; overflow: hidden; }
.win { position: absolute; display: flex; flex-direction: column; padding: 2px; border: 1px solid #d6d3ce; border-right: 1px solid #424142; border-bottom: 1px solid #424142; box-shadow: inset 1px 1px #fff, inset -1px -1px #848284; background: #d6d3ce; }
.labels { left: 0; top: 0; width: 582px; height: 411px; }
.card { left: -1px; top: 370px; width: 551px; }
.sheet { left: 606px; top: 177px; right: -8px; height: 539px; }
.cap { display: flex; align-items: center; height: 19px; margin: 1px 1px 0; padding: 0 3px 0 2px; background: #848284; color: #d6d3ce; border-bottom: 1px solid #d6d3ce; box-shadow: 0 1px #fff; }
.cap h2 { margin: 0 auto 0 1px; }
.active .cap { background: #08246b; color: #fff; }
.cb { display: flex; align-items: center; justify-content: center; width: 16px; height: 14px; background: #d6d3ce; border: 1px solid; border-color: #fff #424142 #424142 #fff; box-shadow: inset -1px -1px #848284; }
.cb svg { width: 9px; height: 9px; }
.cb.x { margin-left: 2px; }
.wtools { display: flex; align-items: center; height: 28px; padding: 2px 0 0 6px; }
.wtools button { width: 23px; display: flex; justify-content: center; }
.client { margin-left: 1px; margin-right: 1px; flex: 1; border: solid; border-width: 2px 1px 1px 2px; border-color: #424142 #fff #fff #424142; }

/* shared controls */
.box { margin: 0; min-width: 0; border: 1px solid #848284; box-shadow: 1px 1px #fff, inset 1px 1px #fff; }
.box legend { padding: 0 2px; margin-left: -4px; height: 13px; background: #d6d3ce; white-space: nowrap; }
.btn { display: flex; align-items: center; justify-content: center; height: 22px; white-space: nowrap; background: #d6d3ce; border: 1px solid; border-color: #fff #424142 #424142 #fff; box-shadow: inset -1px -1px #848284; }
.fld { height: 20px; min-width: 0; padding: 0 2px; background: #fff; border: 1px solid; border-color: #848284 #fff #fff #848284; box-shadow: inset 1px 1px #424142, inset -1px -1px #d6d3ce; }
.combo { display: flex; height: 20px; min-width: 0; border: 1px solid; border-color: #848284 #fff #fff #848284; box-shadow: inset 1px 1px #424142; padding: 1px 0 0 1px; }
.combo input { flex: 1; width: 0; padding: 0 2px; border: 1px solid #fff; }
.combo.num input { text-align: right; }
.combo.w input { background: #fff; }
.combo button { display: flex; align-items: center; justify-content: center; width: 17px; margin: -2px -1px -1px 1px; font-weight: bold; background: #d6d3ce; border: 1px solid #000; box-shadow: inset 1px 1px #fff, inset -1px -1px #848284, inset -2px -2px #848284; }
.combo button svg { width: 10px; height: 10px; }
input[type=checkbox], input[type=radio] { appearance: none; width: 13px; height: 13px; flex: none; background: #fff; }
input[type=checkbox] { border: 1px solid; border-color: #848284 #fff #fff #848284; box-shadow: inset 1px 1px #424142, inset -1px -1px #d6d3ce; }
.ck input:checked { position: relative; }
.ck input:checked::after { content: ""; position: absolute; left: 2px; top: 2px; width: 7px; height: 7px; background: #000; clip-path: polygon(0 2px, 2px 4px, 7px 0, 7px 3px, 2px 7px, 0 5px); }
input[type=radio] { width: 12px; height: 12px; border-radius: 50%; border: 1px solid; border-color: #848284 #fff #fff #848284; box-shadow: inset 1px 1px #424142; }
input[type=radio]:checked { background: radial-gradient(circle, #000 2px, #fff 3px); }
.hbar, .vbar { display: flex; background: #fff conic-gradient(#d6d3ce 25%, #fff 0 50%, #d6d3ce 0 75%, #fff 0) 0 0 / 2px 2px; }
.vbar { flex-direction: column; width: 16px; }
.sb, .thumb { background: #d6d3ce; border: 1px solid; border-color: #fff #424142 #424142 #fff; box-shadow: inset -1px -1px #848284; }
.sb { display: flex; align-items: center; justify-content: center; width: 16px; height: 16px; flex: none; }
.hbar svg { width: 4px; height: 7px; }
.vbar svg { width: 7px; height: 4px; }

/* label printing */
.split { display: flex; }
.goods { width: 281px; padding: 2px 7px 0 9px; }
.heading { display: block; width: max-content; font: bold 13px/18px "DejaVu Sans", sans-serif; color: #0000ff; }
.goodsbox { margin: 4px 0 0 5px; padding: 5px 13px 20px 9px; }
.list { display: flex; flex-direction: column; height: 265px; background: #fff; border: 1px solid; border-color: #848284 #fff #fff #848284; box-shadow: inset 1px 1px #424142; padding: 1px 1px 0 1px; }
.item { height: 14px; padding: 0 2px; line-height: 14px; white-space: nowrap; }
.on { background: #08246b; color: #fff; }
.list .hbar { margin-top: auto; }
.list .thumb { flex: 1; margin-right: 3px; }
.opts { flex: 1; padding-top: 3px; }
.extra { width: 260px; padding: 7px 10px 6px 8px; }
.logo { width: 100%; height: 44px; background: #fff; stroke: #000; margin-bottom: 2px; }
.extra label { display: block; margin-bottom: 3px; }
.extra .fld { width: 100%; height: 22px; display: block; }
.mid { display: flex; margin: 6px 0 0 5px; gap: 10px; }
.acts { display: flex; flex-direction: column; gap: 4px; width: 84px; padding-top: 4px; }
.checks { width: 160px; padding: 3px 0 2px 12px; }
.ck { display: flex; align-items: center; height: 20px; gap: 19px; }
.ck label, .rw label, .curr label { display: flex; align-items: center; gap: 5px; white-space: nowrap; }
.two { width: 12px; height: 20px; }
.cat { display: flex; align-items: center; margin-top: 17px; padding-left: 2px; }
.catname { width: 98px; }
.dots { width: 16px; margin-right: 7px; }
.size { margin-top: 7px; padding-left: 46px; font: bold 11px/13px "DejaVu Sans Condensed", "DejaVu Sans", sans-serif; }
.sizefld { width: 269px; margin: 4px 0 4px 3px; }
.print { width: 84px; margin-left: 188px; justify-content: flex-end; padding-right: 3px; }

/* price tags */
.paper { flex: 1; display: grid; grid-template: auto 1fr / 253px 1fr; padding-top: 3px; margin-left: 1px; background: #fff; border: solid #424142; border-width: 2px 0 0 2px; font-family: "Liberation Sans", Arial, sans-serif; }
.tag { height: 71px; padding-left: 4px; border-top: 1px dotted #000; border-right: 1px dotted #000; border-bottom: 1px dotted #000; }
.tname { font-size: 16px; font-weight: bold; line-height: 20px; }
.tprice { display: flex; align-items: baseline; padding: 15px 3px 0 8px; font-size: 18px; line-height: 24px; }
.tprice strong { margin-left: 16px; font-size: 19px; text-decoration: underline; }
.tprice small { margin-left: auto; font-size: 13px; }
.rest { grid-column: 1; margin-top: 3px; border-top: 1px dotted #000; border-right: 1px dotted #000; }
.next { grid-area: 1 / 2 / 3 / 3; margin-left: 3px; border-top: 1px dotted #000; border-left: 1px dotted #000; }
.sheet .hbar { margin-left: 3px; }
.sheet .thumb { flex: 1; }

/* item card */
.card .client { margin-left: 0; padding-bottom: 40px; }
.tabs { display: flex; align-items: flex-end; height: 21px; padding-left: 2px; }
.tabs button { height: 20px; margin-right: 1px; padding: 0 4px 0 5px; white-space: nowrap; border: 1px solid; border-color: #fff #424142 transparent #fff; box-shadow: inset -1px 0 #848284; border-radius: 2px 2px 0 0; }
.tabs .cur { height: 22px; padding: 0 6px 3px; margin-bottom: -1px; background: #d6d3ce; border-bottom: 0; position: relative; }
.panel { padding: 3px 9px 0 10px; border: solid; border-width: 1px 2px 0 1px; border-color: #fff #848284 #fff #fff; }
.line { display: flex; align-items: center; margin-bottom: 1px; }
.grow { flex: 1; }
.l1 { width: 81px; }
.code { width: 89px; }
.ltype { width: 37px; padding-left: 8px; }
.lcat { width: 76px; padding-left: 13px; }
.side { width: 123px; }
.grow + .side { margin-left: 4px; }
.groups { display: flex; margin: 2px 2px 0 0; }
.cost { width: 202px; padding: 4px 7px 6px 9px; }
.rw { display: flex; align-items: center; justify-content: space-between; height: 24px; }
.rw .combo { width: 98px; }
.curr { flex: 1; margin-left: -1px; display: grid; grid-template: 24px 24px 24px / 95px 102px 1fr; align-items: center; padding: 4px 6px 0 9px; }
.warn { grid-row: 2 / 4; align-self: start; padding-top: 5px; color: #840000; }
.prices { margin: 2px 2px 0 0; padding: 8px 3px 7px 5px; border: 1px solid #848284; box-shadow: 1px 1px #fff, inset 1px 1px #fff; }
.ptools { display: flex; align-items: center; margin-bottom: 2px; }
.ptools > span { margin-right: auto; }
.ptools .btn { width: 33px; }
.ptools .hist { width: 68px; gap: 4px; }
.ptools .upd { width: 75px; padding: 1px; margin-left: 1px; }
.upd span { display: flex; align-items: center; justify-content: center; width: 100%; height: 17px; gap: 0; border: 1px dotted #000; }
.upd .ic { margin-right: 3px; }
.grid { display: flex; height: 86px; overflow: hidden; padding: 1px 1px 0 1px; border: 1px solid; border-color: #848284 #fff #fff #848284; box-shadow: inset 1px 1px #424142; }
.grid table { flex: 1; table-layout: fixed; width: 0; border-spacing: 0; background: #fff; height: 90px; }
.grid th, .grid td { height: 15px; padding: 0 2px; line-height: 12px; text-align: left; border-bottom: 1px solid #000; border-right: 3px double #000; white-space: nowrap; }
.grid th { font: bold 12px/12px "DejaVu Sans Condensed", "DejaVu Sans", sans-serif; background: #d6d3ce; border-bottom: 3px double #000; }
.grid th:last-child, .grid td:last-child { border-right: 0; }
.grid .n { text-align: right; padding-right: 1px; }
.c2 { width: 78px; }
.c3 { width: 40px; }
.c4 { width: 53px; }
.sel td:first-child { background: #08246b; color: #fff; }
td input[type=checkbox] { display: block; width: 11px; height: 11px; margin: 1px 0 0 4px; border: 1px solid #848284; box-shadow: none; }
.vbar .thumb { height: 16px; margin-bottom: auto; }
.note { display: flex; align-items: center; justify-content: flex-end; gap: 12px; }
.note .dots { margin: 0; width: 18px; }
.foot { display: flex; gap: 2px; margin-top: 1px; }
.foot .btn { width: 82px; }
.foot .hist { justify-content: flex-start; gap: 10px; padding-left: 2px; }

.status { display: flex; height: 8px; padding: 5px 0 2px 3px; border-top: 1px solid #fff; }
.s1 { width: 275px; background: #fff; }
.s2 { width: 276px; margin-left: 3px; background: #424142; }
.scroll { display: flex; height: 6px; background: #f0f0f0; }
.scroll button { width: 17px; display: flex; justify-content: center; }
.scroll svg { width: 8px; height: 6px; }
.scroll i { flex: 0 1 695px; background: #cdcdcd; }
.marks { position: absolute; left: 0; top: 0; width: 981px; height: 984px; pointer-events: none; shape-rendering: auto; }
```
